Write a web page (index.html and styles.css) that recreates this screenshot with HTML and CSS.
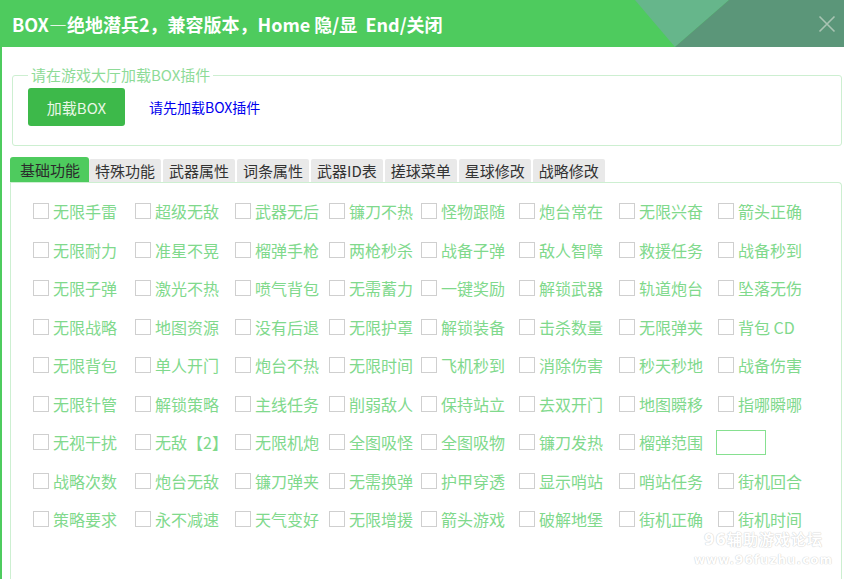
FILE: index.html
```html
<!DOCTYPE html>
<html lang="zh-CN">
<head>
<meta charset="utf-8">
<title>BOX</title>
<link rel="stylesheet" href="styles.css">
</head>
<body>
<div class="window">
  <header class="titlebar">
    <h1 class="title">BOX—绝地潜兵2，兼容版本，Home 隐/显&nbsp;&nbsp;End/关闭</h1>
    <svg class="title-deco" width="844" height="47" viewBox="0 0 844 47" aria-hidden="true">
      <polygon points="635,0 729,0 675,47" fill="#66b68b"/>
      <polygon points="729,0 844,0 844,47 675,47" fill="#5b9679"/>
    </svg>
    <button class="close" aria-label="关闭">
      <svg width="18" height="18" viewBox="0 0 18 18"><path d="M1.5 1.5 L16.5 16.5 M16.5 1.5 L1.5 16.5" stroke="#a9c4b3" stroke-width="1.6" fill="none"/></svg>
    </button>
  </header>

  <main class="content">
    <fieldset class="group">
      <legend class="group-legend">请在游戏大厅加载BOX插件</legend>
      <div class="group-row">
        <button class="load-btn">加载BOX</button>
        <span class="status">请先加载BOX插件</span>
      </div>
    </fieldset>

    <nav class="tabs">
      <span class="tab active">基础功能</span>
      <span class="tab">特殊功能</span>
      <span class="tab">武器属性</span>
      <span class="tab">词条属性</span>
      <span class="tab">武器ID表</span>
      <span class="tab">搓球菜单</span>
      <span class="tab">星球修改</span>
      <span class="tab">战略修改</span>
    </nav>

    <section class="panel">
      <div class="grid">
        <label class="opt"><span class="box"></span>无限手雷</label>
        <label class="opt"><span class="box"></span>超级无敌</label>
        <label class="opt"><span class="box"></span>武器无后</label>
        <label class="opt"><span class="box"></span>镰刀不热</label>
        <label class="opt"><span class="box"></span>怪物跟随</label>
        <label class="opt"><span class="box"></span>炮台常在</label>
        <label class="opt"><span class="box"></span>无限兴奋</label>
        <label class="opt"><span class="box"></span>箭头正确</label>

        <label class="opt"><span class="box"></span>无限耐力</label>
        <label class="opt"><span class="box"></span>准星不晃</label>
        <label class="opt"><span class="box"></span>榴弹手枪</label>
        <label class="opt"><span class="box"></span>两枪秒杀</label>
        <label class="opt"><span class="box"></span>战备子弹</label>
        <label class="opt"><span class="box"></span>敌人智障</label>
        <label class="opt"><span class="box"></span>救援任务</label>
        <label class="opt"><span class="box"></span>战备秒到</label>

        <label class="opt"><span class="box"></span>无限子弹</label>
        <label class="opt"><span class="box"></span>激光不热</label>
        <label class="opt"><span class="box"></span>喷气背包</label>
        <label class="opt"><span class="box"></span>无需蓄力</label>
        <label class="opt"><span class="box"></span>一键奖励</label>
        <label class="opt"><span class="box"></span>解锁武器</label>
        <label class="opt"><span class="box"></span>轨道炮台</label>
        <label class="opt"><span class="box"></span>坠落无伤</label>

        <label class="opt"><span class="box"></span>无限战略</label>
        <label class="opt"><span class="box"></span>地图资源</label>
        <label class="opt"><span class="box"></span>没有后退</label>
        <label class="opt"><span class="box"></span>无限护罩</label>
        <label class="opt"><span class="box"></span>解锁装备</label>
        <label class="opt"><span class="box"></span>击杀数量</label>
        <label class="opt"><span class="box"></span>无限弹夹</label>
        <label class="opt"><span class="box"></span>背包 CD</label>

        <label class="opt"><span class="box"></span>无限背包</label>
        <label class="opt"><span class="box"></span>单人开门</label>
        <label class="opt"><span class="box"></span>炮台不热</label>
        <label class="opt"><span class="box"></span>无限时间</label>
        <label class="opt"><span class="box"></span>飞机秒到</label>
        <label class="opt"><span class="box"></span>消除伤害</label>
        <label class="opt"><span class="box"></span>秒天秒地</label>
        <label class="opt"><span class="box"></span>战备伤害</label>

        <label class="opt"><span class="box"></span>无限针管</label>
        <label class="opt"><span class="box"></span>解锁策略</label>
        <label class="opt"><span class="box"></span>主线任务</label>
        <label class="opt"><span class="box"></span>削弱敌人</label>
        <label class="opt"><span class="box"></span>保持站立</label>
        <label class="opt"><span class="box"></span>去双开门</label>
        <label class="opt"><span class="box"></span>地图瞬移</label>
        <label class="opt"><span class="box"></span>指哪瞬哪</label>

        <label class="opt"><span class="box"></span>无视干扰</label>
        <label class="opt"><span class="box"></span>无敌【2】</label>
        <label class="opt"><span class="box"></span>无限机炮</label>
        <label class="opt"><span class="box"></span>全图吸怪</label>
        <label class="opt"><span class="box"></span>全图吸物</label>
        <label class="opt"><span class="box"></span>镰刀发热</label>
        <label class="opt"><span class="box"></span>榴弹范围</label>
        <div class="opt"><span class="field"></span></div>

        <label class="opt"><span class="box"></span>战略次数</label>
        <label class="opt"><span class="box"></span>炮台无敌</label>
        <label class="opt"><span class="box"></span>镰刀弹夹</label>
        <label class="opt"><span class="box"></span>无需换弹</label>
        <label class="opt"><span class="box"></span>护甲穿透</label>
        <label class="opt"><span class="box"></span>显示哨站</label>
        <label class="opt"><span class="box"></span>哨站任务</label>
        <label class="opt"><span class="box"></span>街机回合</label>

        <label class="opt"><span class="box"></span>策略要求</label>
        <label class="opt"><span class="box"></span>永不减速</label>
        <label class="opt"><span class="box"></span>天气变好</label>
        <label class="opt"><span class="box"></span>无限增援</label>
        <label class="opt"><span class="box"></span>箭头游戏</label>
        <label class="opt"><span class="box"></span>破解地堡</label>
        <label class="opt"><span class="box"></span>街机正确</label>
        <label class="opt"><span class="box"></span>街机时间</label>
      </div>
      <div class="watermark">
        <div class="wm-1">96辅助游戏论坛</div>
        <div class="wm-2">www.96fuzhu.com</div>
      </div>
    </section>
  </main>
</div>
</body>
</html>
```

FILE: styles.css
```css
* { box-sizing: border-box; }

html, body {
  margin: 0;
  padding: 0;
  width: 844px;
  height: 579px;
  overflow: hidden;
  background: #ffffff;
  font-family: "Noto Sans CJK SC", "Noto Sans", sans-serif;
}

.window {
  width: 844px;
  height: 579px;
  display: flex;
  flex-direction: column;
  border-left: 2px solid #4ecb5e;
  overflow: hidden;
}

.titlebar {
  position: relative;
  height: 47px;
  margin-left: -2px;
  flex: none;
  background: #4ecb5e;
  display: flex;
  align-items: center;
  padding-left: 12px;
}

.title {
  position: relative;
  z-index: 1;
  margin: 0;
  color: #ffffff;
  font-size: 18px;
  font-weight: bold;
  line-height: 20px;
  letter-spacing: 0;
  white-space: nowrap;
}

.title-deco {
  position: absolute;
  left: 0;
  top: 0;
}

.close {
  position: absolute;
  right: 8px;
  top: 15px;
  width: 18px;
  height: 18px;
  padding: 0;
  border: 0;
  background: transparent;
  display: block;
}
.close svg { display: block; }

.content {
  flex: 1;
  padding: 0 0 0 8px;
  display: flex;
  flex-direction: column;
}

.group {
  margin: 19px 2px 0 2px;
  padding: 0 0 19px 15px;
  border: 1px solid #cdefd1;
  border-radius: 3px;
  min-width: 0;
}

.group-legend {
  padding: 0 3px;
  color: #8edb97;
  font-size: 15px;
  line-height: 18px;
}

.group-row {
  display: flex;
  align-items: center;
  gap: 24px;
  margin-top: 4px;
}

.load-btn {
  width: 97px;
  height: 38px;
  border: 0;
  border-radius: 3px;
  background: #3db94a;
  color: #e9f7e6;
  font-family: inherit;
  font-size: 15px;
  padding: 0;
}

.status {
  color: #0000ee;
  font-size: 14px;
  line-height: 18px;
}

.tabs {
  display: flex;
  align-items: flex-end;
  margin-top: 11px;
  height: 25px;
  flex: none;
}

.tab {
  height: 23px;
  padding: 0 6px;
  margin-right: 2px;
  background: #e9e9e9;
  color: #333333;
  font-size: 15px;
  line-height: 23px;
  border-radius: 2px 2px 0 0;
  white-space: nowrap;
}

.tab.active {
  height: 25px;
  width: 79px;
  padding: 0 0 0 10px;
  margin-right: 0;
  background: #4ecb5e;
  color: #2b2b2b;
  line-height: 25px;
  border-radius: 3px 3px 0 0;
}

.panel {
  position: relative;
  flex: 1;
  border: 1px solid #cdefd1;
  border-bottom: 0;
  border-radius: 0 4px 0 0;
  margin-right: 2px;
  padding: 9px 0 0 22px;
}

.grid {
  display: grid;
  grid-template-columns: 102px 100px 94px 92px 98px 100px 99px 1fr;
  grid-auto-rows: 38.5px;
}

.opt {
  display: flex;
  align-items: center;
  color: #80d98c;
  font-size: 16px;
  line-height: 20px;
  white-space: nowrap;
}

.box {
  width: 16px;
  height: 16px;
  border: 1.5px solid #cfcfcf;
  background: #ffffff;
  margin-right: 4px;
  flex: none;
}

.field {
  width: 50px;
  height: 25px;
  margin-left: -2px;
  border: 1.5px solid #86e090;
  background: #ffffff;
}

.watermark {
  position: absolute;
  right: 8px;
  bottom: 12px;
  text-align: center;
  color: #ffffff;
  text-shadow: 0 0 1px #cccccc, 0 0 1px #cccccc;
  font-family: "DejaVu Sans", sans-serif;
  line-height: 1.2;
}
.wm-1 { font-size: 15px; font-weight: bold; letter-spacing: 1px; }
.wm-2 { font-size: 12px; font-weight: bold; letter-spacing: 1px; margin-top: 4px; }
```
